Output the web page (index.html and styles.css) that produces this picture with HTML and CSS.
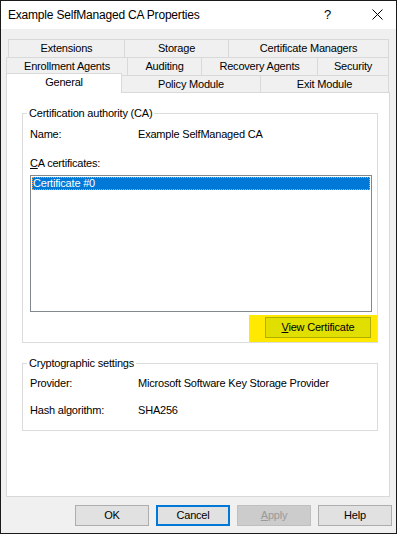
FILE: index.html
```html
<!DOCTYPE html>
<html>
<head>
<meta charset="utf-8">
<title>Example SelfManaged CA Properties</title>
<link rel="stylesheet" href="styles.css">
</head>
<body>
<div class="window">
  <div class="titlebar">
    <span class="title">Example SelfManaged CA Properties</span>
    <span class="help">?</span>
    <span class="close"><svg width="11" height="11" viewBox="0 0 11 11"><path d="M0.5 0.5 L10.5 10.5 M10.5 0.5 L0.5 10.5" stroke="#000" stroke-width="1" fill="none"/></svg></span>
  </div>
  <div class="content">
    <div class="tabs">
      <div class="tabrow row1">
        <div class="tab t-ext">Extensions</div>
        <div class="tab t-sto">Storage</div>
        <div class="tab t-cm">Certificate Managers</div>
      </div>
      <div class="tabrow row2">
        <div class="tab t-enr">Enrollment Agents</div>
        <div class="tab t-aud">Auditing</div>
        <div class="tab t-rec">Recovery Agents</div>
        <div class="tab t-sec">Security</div>
      </div>
      <div class="tabrow row3">
        <div class="tab t-gen selected">General</div>
        <div class="tab t-pol">Policy Module</div>
        <div class="tab t-exit">Exit Module</div>
      </div>
    </div>
    <div class="panel">
      <fieldset class="group group-ca">
        <legend>Certification authority (CA)</legend>
        <div class="row name-row"><span class="label">Name:</span><span class="value">Example SelfManaged CA</span></div>
        <div class="row cert-label"><span><u>C</u>A certificates:</span></div>
        <div class="listbox">
          <div class="item">Certificate #0</div>
        </div>
        <div class="highlight-row">
          <div class="highlight">
            <div class="btn btn-view"><u>V</u>iew Certificate</div>
          </div>
        </div>
      </fieldset>
      <fieldset class="group group-crypto">
        <legend>Cryptographic settings</legend>
        <div class="row provider-row"><span class="label">Provider:</span><span class="value">Microsoft Software Key Storage Provider</span></div>
        <div class="row hash-row"><span class="label">Hash algorithm:</span><span class="value">SHA256</span></div>
      </fieldset>
    </div>
    <div class="buttons">
      <div class="btn btn-dlg">OK</div>
      <div class="btn btn-dlg btn-default">Cancel</div>
      <div class="btn btn-dlg btn-disabled"><u>A</u>pply</div>
      <div class="btn btn-dlg">Help</div>
    </div>
  </div>
</div>
</body>
</html>
```
FILE: styles.css
```css
html, body {
  margin: 0;
  padding: 0;
  background: #ffffff;
}

body {
  font-family: "Liberation Sans", Arial, sans-serif;
  font-size: 11px;
  letter-spacing: -0.2px;
  color: #000000;
}

.window {
  width: 397px;
  height: 534px;
  box-sizing: border-box;
  border: 1px solid #1a1a1a;
  background: #f0f0f0;
}

/* Title bar */
.titlebar {
  height: 28px;
  background: #ffffff;
  display: flex;
  align-items: center;
  padding: 0 13px 0 7px;
  font-size: 12px;
}

.title {
  flex: 1;
}

.help {
  font-size: 13px;
  width: 7px;
  margin-right: 41px;
  margin-bottom: 2px;
}

.close {
  display: flex;
  margin-bottom: 2px;
}

.close svg {
  display: block;
}

/* Content */
.content {
  padding: 10px 4px 0 5px;
}

/* Tabs */
.tabrow {
  display: flex;
  height: 18px;
}

.row1 {
  margin-left: 2px;
}

.row3 {
  height: 17px;
}

.tab {
  box-sizing: border-box;
  height: 18px;
  border: 1px solid #d9d9d9;
  border-bottom: none;
  text-align: center;
  line-height: 16px;
  margin-left: -1px;
  background: #f0f0f0;
  white-space: nowrap;
}

.tab:first-child {
  margin-left: 0;
}

.row3 .tab {
  height: 17px;
}

.row3 .tab.selected {
  height: 20px;
  margin-top: -2px;
  background: #ffffff;
  position: relative;
  z-index: 1;
}

.t-ext { width: 117px; }
.t-sto { width: 105px; }
.t-cm { width: 161px; }
.t-enr { width: 122px; }
.t-aud { width: 75px; }
.t-rec { width: 117px; }
.t-sec { width: 72px; }
.t-gen { width: 116px; }
.t-pol { width: 140px; }
.t-exit { width: 129px; }

/* Panel */
.panel {
  box-sizing: border-box;
  width: 384px;
  height: 405px;
  background: #ffffff;
  border: 1px solid #d9d9d9;
  padding: 14px 11px 0 15px;
}

.group {
  margin: 0;
  border: 1px solid #dcdcdc;
  padding: 0 5px 0 7px;
  min-width: 0;
}

.group legend {
  padding: 0 2px;
  margin-left: -3px;
  line-height: 13px;
}

.row {
  display: flex;
  line-height: 13px;
}

.label {
  width: 108px;
  flex: none;
}

.name-row {
  margin-top: 8px;
}

.cert-label {
  margin-top: 16px;
}

.listbox {
  margin-top: 5px;
  height: 137px;
  box-sizing: border-box;
  border: 1px solid #828790;
  background: #ffffff;
  padding: 1px;
}

.item {
  box-sizing: border-box;
  height: 13px;
  line-height: 11px;
  background: #0078d7;
  color: #ffffff;
  border: 1px dotted #ff9a4a;
}

.highlight-row {
  display: flex;
  justify-content: flex-end;
  margin-top: 3px;
  margin-right: -5px;
}

.highlight {
  background: #ffe900;
  padding: 2px 6px 4px 16px;
}

.btn {
  box-sizing: border-box;
  border: 1px solid #adadad;
  background: #e1e1e1;
  text-align: center;
  height: 21px;
  line-height: 19px;
}

.btn-view {
  width: 106px;
  background: #e0df00;
  border-color: #b0ad00;
}

.group-crypto {
  margin-top: 14px;
  padding-bottom: 13px;
}

.provider-row {
  margin-top: 7px;
}

.hash-row {
  margin-top: 14px;
}

/* Dialog buttons */
.buttons {
  display: flex;
  justify-content: flex-end;
  gap: 7px;
  margin-top: 8px;
}

.btn-dlg {
  width: 74px;
}

.btn-default {
  border: 2px solid #0078d7;
  line-height: 17px;
}

.btn-disabled {
  background: #cccccc;
  border-color: #bfbfbf;
  color: #9a9a9a;
}
```
